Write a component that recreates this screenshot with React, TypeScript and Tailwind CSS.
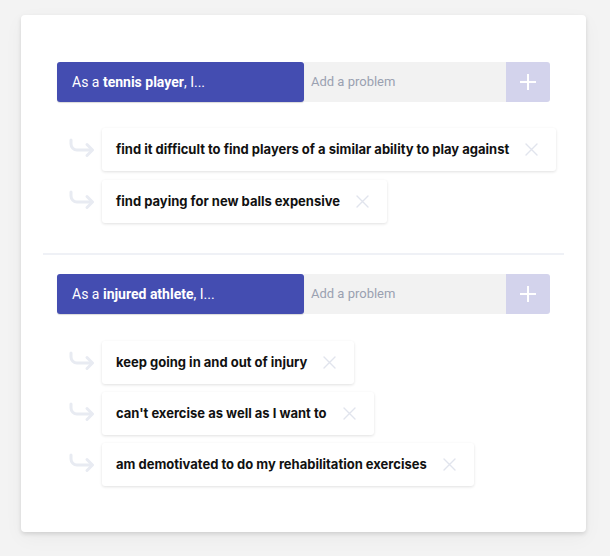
import React from "react";

const Arrow = () => (
  <svg width="28" height="22" viewBox="0 0 28 22" fill="none" stroke="#e8ebf2" strokeWidth="3" strokeLinecap="round" strokeLinejoin="round">
    <path d="M3 3 v4 a6 6 0 0 0 6 6 h15" />
    <path d="M19 7.5 l5.5 5.5 -5.5 5.5" />
  </svg>
);

const XIcon = () => (
  <svg width="13" height="13" viewBox="0 0 13 13" stroke="#e1e4ed" strokeWidth="1.4" strokeLinecap="round">
    <path d="M1 1 L12 12 M12 1 L1 12" />
  </svg>
);

const Plus = () => (
  <svg width="16" height="16" viewBox="0 0 16 16" stroke="#ffffff" strokeWidth="2">
    <path d="M8 0 V16 M0 8 H16" />
  </svg>
);

function Header({ who }: { who: string }) {
  return (
    <div className="flex h-10 w-[493px]">
      <div className="flex items-center w-[247px] bg-[#444db1] rounded-[3px] pl-[15px] text-white text-[14px] shadow-[0_1px_1px_rgba(0,0,0,0.15)] z-10" style={{ fontFamily: "Roboto, 'Noto Sans', sans-serif" }}>
        <span>As a&nbsp;</span>
        <span className="font-bold">{who}</span>
        <span>, I...</span>
      </div>
      <div className="flex items-center w-[202px] bg-[#f2f2f2] pl-[7px] text-[13px] text-[#9aa1b1]" style={{ fontFamily: "Roboto, 'Noto Sans', sans-serif" }}>
        Add a problem
      </div>
      <div className="flex items-center justify-center w-[44px] bg-[#d3d3ec] rounded-r-[3px]">
        <Plus />
      </div>
    </div>
  );
}

function Problem({ text }: { text: string }) {
  return (
    <div className="flex items-center">
      <div className="w-[45px] shrink-0 flex justify-end pr-[6px] -mt-[3px]">
        <Arrow />
      </div>
      <div className="flex shrink-0 items-center h-[43px] bg-white rounded-[3px] shadow-[0_1px_3px_rgba(0,0,0,0.12)] pl-[14px] pr-[18px]">
        <span className="whitespace-nowrap text-[13px] font-bold text-[#111111]" style={{ fontFamily: "Inter, 'Noto Sans', sans-serif" }}>
          {text}
        </span>
        <span className="ml-[16px] flex items-center">
          <XIcon />
        </span>
      </div>
    </div>
  );
}

export default function App() {
  return (
    <div className="min-h-[556px] w-[610px] bg-[#f3f3f3] pt-[15px] pl-[21px]">
      <div className="w-[565px] h-[517px] bg-white rounded-[4px] shadow-[0_2px_4px_rgba(0,0,0,0.12),0_6px_20px_rgba(0,0,0,0.04)] px-[22px] pt-[47px]">
        <div className="px-[14px]">
          <Header who="tennis player" />
          <div className="mt-[26px] flex flex-col gap-[9px]">
            <Problem text="find it difficult to find players of a similar ability to play against" />
            <Problem text="find paying for new balls expensive" />
          </div>
        </div>
        <div className="mt-[30px] h-[2px] bg-[#eff1f6]" />
        <div className="px-[14px] mt-[19px]">
          <Header who="injured athlete" />
          <div className="mt-[27px] flex flex-col gap-[8px]">
            <Problem text="keep going in and out of injury" />
            <Problem text="can't exercise as well as I want to" />
            <Problem text="am demotivated to do my rehabilitation exercises" />
          </div>
        </div>
      </div>
    </div>
  );
}
